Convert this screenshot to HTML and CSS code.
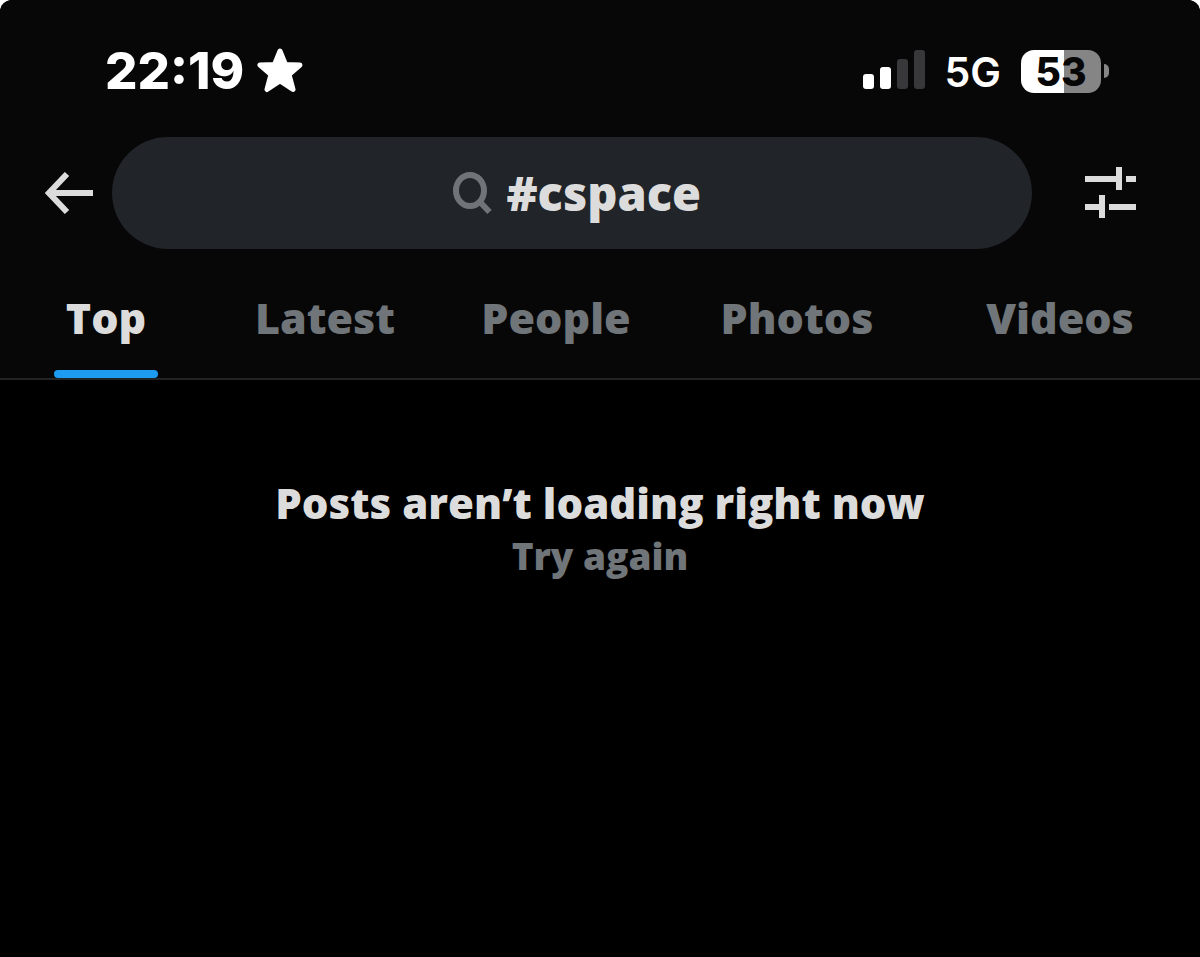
FILE: index.html
```html
<!DOCTYPE html>
<html lang="en">
<head>
<meta charset="utf-8">
<meta name="viewport" content="width=device-width, initial-scale=1">
<title>#cspace</title>
<link rel="stylesheet" href="styles.css">
</head>
<body>
<div class="screen">
  <header class="header">
    <div class="status">
      <div class="status-left">
        <span class="time">22:19</span>
        <svg class="star" viewBox="0 0 46 46" aria-hidden="true"><path d="M23 3 28.500 16.500 43 17 32 26.500 36 41.500 23 33 10 41.500 14 26.500 3 17 17.500 16.500Z" fill="#fff" stroke="#fff" stroke-width="5" stroke-linejoin="round"/></svg>
      </div>
      <div class="status-right">
        <svg class="signal" viewBox="0 0 62 42" aria-hidden="true">
          <rect x="0" y="24" width="11" height="15" rx="3" fill="#fff"/>
          <rect x="17" y="17" width="11" height="22" rx="3" fill="#fff"/>
          <rect x="34" y="9" width="11" height="30" rx="3" fill="#38383a"/>
          <rect x="51" y="0" width="11" height="39" rx="3" fill="#38383a"/>
        </svg>
        <span class="network">5G</span>
        <div class="battery"><span class="battery-body">53</span><span class="battery-tip"></span></div>
      </div>
    </div>
    <div class="toolbar">
      <button class="icon-button back" type="button" aria-label="Back">
        <svg viewBox="0 0 48 42" width="48" height="42"><path d="M22 2 4 21 22 40M3 21H48" fill="none" stroke="#dcdcdc" stroke-width="6"/></svg>
      </button>
      <label class="search">
        <svg viewBox="0 0 40 43" width="40" height="43" aria-hidden="true"><ellipse cx="18" cy="18.500" rx="14" ry="15.500" fill="none" stroke="#707478" stroke-width="6"/><path d="m28 30 9.500 10" stroke="#707478" stroke-width="6"/></svg>
        <input class="search-input" type="text" value="#cspace" aria-label="Search">
      </label>
      <button class="icon-button filters" type="button" aria-label="Search filters">
        <svg viewBox="0 0 52 52" width="52" height="52" fill="#dcdcdc"><path d="M0 9h31V0h6v23h-6v-8H0zM41 9h10v6H41zM0 37h14v-9h6v23h-6v-8H0zM24 37h27v6H24z"/></svg>
      </button>
    </div>
    <nav class="tabs" aria-label="Results">
      <a class="tab active" href="#top" aria-current="page">Top</a>
      <a class="tab" href="#latest">Latest</a>
      <a class="tab" href="#people">People</a>
      <a class="tab" href="#photos">Photos</a>
      <a class="tab" href="#videos">Videos</a>
    </nav>
  </header>
  <main class="empty">
    <h1 class="empty-title">Posts aren’t loading right now</h1>
    <button class="retry" type="button">Try again</button>
  </main>
</div>
</body>
</html>
```
FILE: styles.css
```css
* { box-sizing: border-box; }
body {
  margin: 0;
  background: #fff;
  font-family: "Open Sans", "Noto Sans", sans-serif;
  color: #dcdcdc;
}
.screen {
  min-height: 100vh;
  background: #000;
  border-radius: 12px 12px 0 0;
  overflow: hidden;
}
.header {
  background: #070707;
  border-bottom: 2px solid #222324;
}
.status {
  display: flex;
  justify-content: space-between;
  align-items: center;
  height: 137px;
  padding: 5px 91px 0 105px;
  font-family: Inter, sans-serif;
  color: #fff;
}
.status-left, .status-right { display: flex; align-items: center; }
.status-left { gap: 13px; }
.status-right { gap: 20px; }
.time { font-size: 51px; line-height: 62px; font-weight: 800; }
.star { width: 46px; height: 46px; }
.signal { width: 62px; height: 42px; }
.network { padding-top: 2px; font-size: 41px; line-height: 50px; font-weight: 600; }
.battery { display: flex; align-items: center; gap: 3px; }
.battery-body {
  width: 80px;
  height: 43px;
  border-radius: 13px;
  background: linear-gradient(to right, #fff 43px, #858585 43px);
  color: #070707;
  font-size: 39px;
  line-height: 43px;
  font-weight: 800;
  text-align: center;
}
.battery-tip {
  width: 5px;
  height: 14px;
  border-radius: 0 7px 7px 0;
  background: #858585;
}
.toolbar {
  display: grid;
  grid-template-columns: 112px 1fr 168px;
  align-items: center;
}
.icon-button, .retry {
  border: 0;
  padding: 0;
  background: none;
  cursor: pointer;
}
.icon-button { display: flex; }
.back { padding-left: 45px; }
.filters { padding-left: 53px; }
.search {
  display: flex;
  align-items: center;
  justify-content: center;
  gap: 15px;
  height: 112px;
  padding-left: 14px;
  border-radius: 56px;
  background: #212428;
}
.search-input {
  width: 200px;
  padding: 0;
  border: 0;
  outline: 0;
  background: none;
  color: #dcdcdc;
  font: 800 47px/64px "Open Sans", "Noto Sans", sans-serif;
}
.tabs {
  display: grid;
  grid-template-columns: 212fr 226fr 236fr 246fr 280fr;
  justify-items: center;
}
.tab {
  padding: 38px 12px 22px;
  border-bottom: 8px solid transparent;
  color: #707579;
  font-size: 43px;
  line-height: 61px;
  font-weight: 800;
  text-decoration: none;
}
.active { position: relative; color: #dcdcdc; }
.active::after {
  content: "";
  position: absolute;
  left: 0;
  right: 0;
  bottom: -8px;
  height: 8px;
  border-radius: 4px;
  background: #1d9bf0;
}
.empty {
  display: flex;
  flex-direction: column;
  align-items: center;
  padding: 94px 24px;
}
.empty-title {
  margin: 0;
  font-size: 42px;
  line-height: 57px;
  font-weight: 800;
  text-align: center;
}
.retry {
  color: #707579;
  font: 800 37px/50px "Open Sans", "Noto Sans", sans-serif;
}
```
